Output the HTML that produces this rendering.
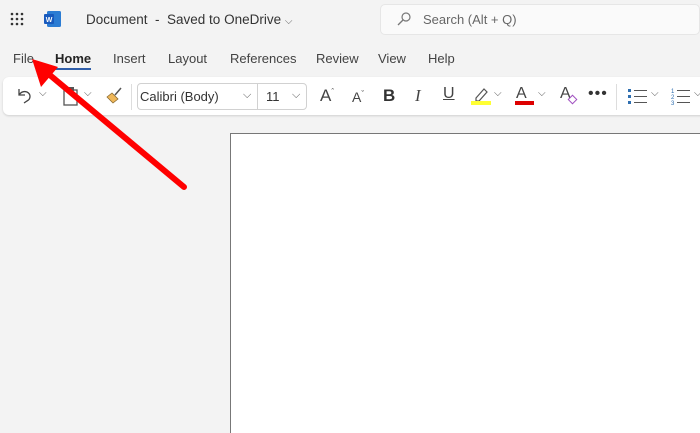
<!DOCTYPE html>
<html><head><meta charset="utf-8"><style>
*{margin:0;padding:0;box-sizing:border-box}
body{width:700px;height:426px;overflow:hidden;background:#f3f3f3;font-family:"Liberation Sans",sans-serif;position:relative;color:#242424}
.a{position:absolute;white-space:nowrap}
.t{font-size:13px;color:#424242}
</style></head><body>
<!-- waffle -->
<svg class="a" style="left:10px;top:12px" width="14" height="14"><g fill="#333">
<circle cx="2" cy="2" r="1.3"/><circle cx="7" cy="2" r="1.3"/><circle cx="12" cy="2" r="1.3"/>
<circle cx="2" cy="7" r="1.3"/><circle cx="7" cy="7" r="1.3"/><circle cx="12" cy="7" r="1.3"/>
<circle cx="2" cy="12" r="1.3"/><circle cx="7" cy="12" r="1.3"/><circle cx="12" cy="12" r="1.3"/></g></svg>
<svg class="a" style="left:44px;top:11px" width="17" height="16"><rect x="3" y="0" width="14" height="16" rx="1.5" fill="#2b7cd3"/><rect x="0" y="3" width="10" height="10" rx="1" fill="#185abd"/><text x="5" y="11" font-size="7" fill="#fff" text-anchor="middle" font-family="Liberation Sans" font-weight="bold">W</text></svg>
<div class="a" style="left:86px;top:12px;font-size:13.5px;color:#333">Document&nbsp; - &nbsp;Saved to OneDrive <span style="font-size:10px;color:#666">⌵</span></div>
<div class="a" style="left:380px;top:4px;width:320px;height:31px;background:#fafafa;border:1px solid #e6e6e6;border-radius:5px"></div>
<svg class="a" style="left:397px;top:12px" width="14" height="14"><circle cx="9" cy="5" r="4" fill="none" stroke="#777" stroke-width="1.2"/><line x1="6" y1="8" x2="1" y2="13" stroke="#777" stroke-width="1.3"/></svg>
<div class="a" style="left:423px;top:12px;font-size:13px;color:#666">Search (Alt + Q)</div>
<!-- tabs -->
<div class="a t" style="left:13px;top:51px">File</div>
<div class="a t" style="left:55px;top:51px;color:#242424;font-weight:bold">Home</div>
<div class="a" style="left:55px;top:68px;width:36px;height:2px;background:#2f5ea9"></div>
<div class="a t" style="left:113px;top:51px">Insert</div>
<div class="a t" style="left:168px;top:51px">Layout</div>
<div class="a t" style="left:230px;top:51px">References</div>
<div class="a t" style="left:316px;top:51px">Review</div>
<div class="a t" style="left:378px;top:51px">View</div>
<div class="a t" style="left:428px;top:51px">Help</div>
<!-- ribbon -->
<div class="a" style="left:3px;top:77px;width:710px;height:38px;background:#fff;border-radius:6px;box-shadow:0 1px 2px rgba(0,0,0,.15)"></div>
<svg class="a" style="left:16px;top:86px" width="20" height="20"><path d="M3 3v6h6M3 9c2-3 5-4 8-3 4 2 4 7 0 9l-3 2" fill="none" stroke="#444" stroke-width="1.3"/></svg>
<div class="a" style="left:39px;top:88px;font-size:10px;color:#555">⌵</div>
<svg class="a" style="left:62px;top:86px" width="18" height="20"><rect x="2" y="4" width="13" height="15" fill="none" stroke="#555" stroke-width="1.3"/><rect x="5" y="1" width="7" height="4" fill="#555"/></svg>
<div class="a" style="left:84px;top:88px;font-size:10px;color:#555">⌵</div>
<svg class="a" style="left:104px;top:85px" width="20" height="20"><path d="M3 12l6 6 5-4-6-6z" fill="#f0b85a" stroke="#8a6a30" stroke-width=".8"/><path d="M11 10l6-7" stroke="#555" stroke-width="1.5"/></svg>
<div class="a" style="left:131px;top:84px;width:1px;height:26px;background:#ddd"></div>
<div class="a" style="left:137px;top:83px;width:170px;height:27px;border:1px solid #d1d1d1;border-radius:4px"></div>
<div class="a" style="left:257px;top:83px;width:1px;height:27px;background:#d1d1d1"></div>
<div class="a" style="left:140px;top:89px;font-size:13px;color:#333">Calibri (Body)</div>
<div class="a" style="left:243px;top:89px;font-size:11px;color:#555">⌵</div>
<div class="a" style="left:266px;top:89px;font-size:13px;color:#333">11</div>
<div class="a" style="left:292px;top:89px;font-size:11px;color:#555">⌵</div>
<div class="a" style="left:320px;top:86px;font-size:17px;color:#444">A<sup style="font-size:8px">ˆ</sup></div>
<div class="a" style="left:352px;top:89px;font-size:14px;color:#444">A<sup style="font-size:8px">ˇ</sup></div>
<div class="a" style="left:383px;top:86px;font-size:17px;font-weight:bold;color:#333">B</div>
<div class="a" style="left:415px;top:86px;font-size:17px;font-style:italic;font-family:'Liberation Serif',serif;color:#444">I</div>
<div class="a" style="left:443px;top:85px;font-size:16px;text-decoration:underline;color:#444">U</div>
<svg class="a" style="left:470px;top:86px" width="22" height="20"><path d="M6 12l8-9 3 3-8 9H6z" fill="none" stroke="#555" stroke-width="1.2"/><rect x="1" y="15" width="20" height="4" fill="#ffff33"/></svg>
<div class="a" style="left:494px;top:88px;font-size:10px;color:#555">⌵</div>
<div class="a" style="left:516px;top:85px;font-size:16px;color:#444">A</div>
<div class="a" style="left:515px;top:101px;width:19px;height:4px;background:#d00"></div>
<div class="a" style="left:538px;top:88px;font-size:10px;color:#555">⌵</div>
<div class="a" style="left:560px;top:85px;font-size:16px;color:#444">A</div>
<div class="a" style="left:569px;top:96px;width:7px;height:7px;border:1.3px solid #a050c0;transform:rotate(45deg)"></div>
<div class="a" style="left:588px;top:85px;font-size:16px;color:#333;letter-spacing:1px">•••</div>
<div class="a" style="left:616px;top:84px;width:1px;height:26px;background:#ddd"></div>
<svg class="a" style="left:627px;top:87px" width="22" height="18"><g fill="#2f6fb0"><rect x="1" y="2" width="3" height="3"/><rect x="1" y="8" width="3" height="3"/><rect x="1" y="14" width="3" height="3"/></g><g stroke="#555"><line x1="7" y1="3.5" x2="20" y2="3.5"/><line x1="7" y1="9.5" x2="20" y2="9.5"/><line x1="7" y1="15.5" x2="20" y2="15.5"/></g></svg>
<div class="a" style="left:651px;top:88px;font-size:10px;color:#555">⌵</div>
<svg class="a" style="left:670px;top:87px" width="22" height="18"><g fill="#2f6fb0" font-size="6" font-family="Liberation Sans"><text x="1" y="6">1</text><text x="1" y="12">2</text><text x="1" y="18">3</text></g><g stroke="#555"><line x1="7" y1="3.5" x2="20" y2="3.5"/><line x1="7" y1="9.5" x2="20" y2="9.5"/><line x1="7" y1="15.5" x2="20" y2="15.5"/></g></svg>
<div class="a" style="left:694px;top:88px;font-size:10px;color:#555">⌵</div>
<!-- page -->
<div class="a" style="left:230px;top:133px;width:480px;height:300px;background:#fff;border-left:1px solid #777;border-top:1px solid #777"></div>
<!-- arrow -->
<svg class="a" style="left:0;top:0" width="700" height="426">
<line x1="184" y1="187" x2="45" y2="71" stroke="#f00" stroke-width="6" stroke-linecap="round"/>
<polygon points="32,59 58,67 41,87" fill="#f00"/>
</svg>
</body></html>
